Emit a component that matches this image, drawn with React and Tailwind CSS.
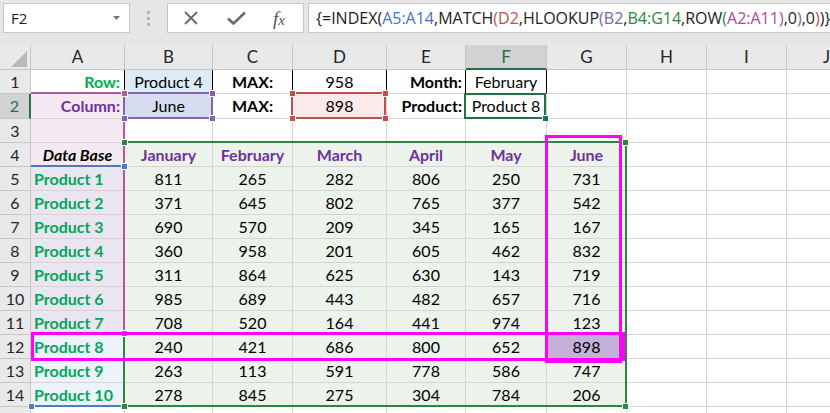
import React from "react";

const months = ["January", "February", "March", "April", "May", "June"];
const data = [
  [811, 265, 282, 806, 250, 731],
  [371, 645, 802, 765, 377, 542],
  [690, 570, 209, 345, 165, 167],
  [360, 958, 201, 605, 462, 832],
  [311, 864, 625, 630, 143, 719],
  [985, 689, 443, 482, 657, 716],
  [708, 520, 164, 441, 974, 123],
  [240, 421, 686, 800, 652, 898],
  [263, 113, 591, 778, 586, 747],
  [278, 845, 275, 304, 784, 206],
];
const cols = ["A", "B", "C", "D", "E", "F", "G", "H", "I", "J"];

const base =
  "border-b border-r border-b-[#d4d4d4] flex items-center overflow-hidden whitespace-nowrap leading-[24px]";

function Cell({ children, className = "", rc = "border-r-[#d4d4d4]" }) {
  return <div className={`${base} ${rc} ${className}`}>{children}</div>;
}

function RowHead({ n, sel }) {
  return (
    <div
      className={
        sel
          ? "border-b border-b-[#c6c6c6] bg-[#d2d2d2] text-[#217346] flex items-center justify-center border-r-2 border-r-[#217346] text-[16px]"
          : "border-b border-r border-b-[#c6c6c6] border-r-[#c6c6c6] bg-[#e9e9e9] text-[#262626] flex items-center justify-center text-[16px]"
      }
    >
      {n}
    </div>
  );
}

function Handle({ className }) {
  return <div className={`absolute w-[7px] h-[7px] border border-white ${className}`} />;
}

export default function App() {
  const rows = [];
  rows.push(
    <React.Fragment key="r1">
      <RowHead n={1} />
      <Cell className="justify-end pr-[4px] font-bold text-[#00b050]" rc="border-r-black">Row:</Cell>
      <Cell className="justify-center bg-[#ddebf7]" rc="border-r-black">Product 4</Cell>
      <Cell className="justify-center font-bold" rc="border-r-black">MAX:</Cell>
      <Cell className="justify-center" rc="border-r-black">958</Cell>
      <Cell className="justify-end pr-[3px] font-bold" rc="border-r-black">Month:</Cell>
      <Cell className="justify-center" rc="border-r-black">February</Cell>
      <Cell />
      <Cell />
      <Cell />
      <Cell />
    </React.Fragment>
  );
  rows.push(
    <React.Fragment key="r2">
      <RowHead n={2} sel />
      <Cell className="justify-end pr-[4px] font-bold text-[#7030a0] bg-[#f6eaf2]">Column:</Cell>
      <Cell className="justify-center bg-[#d6dcf0]">June</Cell>
      <Cell className="justify-center font-bold">MAX:</Cell>
      <Cell className="justify-center bg-[#fbeaea]">898</Cell>
      <Cell className="justify-end pr-[3px] font-bold">Product:</Cell>
      <Cell className="justify-center">Product 8</Cell>
      <Cell />
      <Cell />
      <Cell />
      <Cell />
    </React.Fragment>
  );
  rows.push(
    <React.Fragment key="r3">
      <RowHead n={3} />
      <Cell className="bg-[#f6eaf2]" />
      <Cell />
      <Cell />
      <Cell />
      <Cell />
      <Cell />
      <Cell />
      <Cell />
      <Cell />
      <Cell />
    </React.Fragment>
  );
  rows.push(
    <React.Fragment key="r4">
      <RowHead n={4} />
      <Cell className="justify-center font-bold italic bg-[#f6eaf2]">Data Base</Cell>
      {months.map((m) => (
        <Cell key={m} className="justify-center font-bold text-[#7030a0] bg-[#ebf3ea]">
          {m}
        </Cell>
      ))}
      <Cell />
      <Cell />
      <Cell />
    </React.Fragment>
  );
  data.forEach((vals, i) => {
    const r = i + 5;
    const aBg = r <= 11 ? "bg-[#ebe5f1]" : "bg-[#eef2fa]";
    rows.push(
      <React.Fragment key={"r" + r}>
        <RowHead n={r} />
        <Cell className={`pl-[3px] font-bold text-[#00a85a] ${aBg}`}>Product {i + 1}</Cell>
        {vals.map((v, j) => (
          <Cell
            key={j}
            className={
              r === 12 && j === 5
                ? "justify-center bg-[#c3b1d9]"
                : "justify-center bg-[#ebf3ea]"
            }
          >
            {v}
          </Cell>
        ))}
        <Cell />
        <Cell />
        <Cell />
      </React.Fragment>
    );
  });
  rows.push(
    <React.Fragment key="r15">
      <RowHead n="" />
      {cols.map((c) => (
        <Cell key={c} />
      ))}
    </React.Fragment>
  );

  return (
    <div className="relative w-[830px] h-[413px] overflow-hidden bg-white text-black font-['Lato',sans-serif] text-[16px]">
      {/* Formula bar */}
      <div className="h-[45px] bg-[#e6e6e6] flex items-start pt-[3px] pl-[3px]">
        <div className="w-[127px] h-[30px] bg-white border border-[#c6c6c6] flex items-center justify-between pl-[7px] pr-[9px] font-['Open_Sans',sans-serif] text-[15px] text-[#222]">
          <span>F2</span>
          <svg width="7" height="4" viewBox="0 0 7 4">
            <path d="M0 0 L7 0 L3.5 4 Z" fill="#777" />
          </svg>
        </div>
        <div className="w-[37px] h-[30px] flex flex-col items-center justify-center gap-[3px]">
          <div className="w-[3px] h-[3px] bg-[#b5b5b5]" />
          <div className="w-[3px] h-[3px] bg-[#b5b5b5]" />
          <div className="w-[3px] h-[3px] bg-[#b5b5b5]" />
        </div>
        <div className="w-[137px] h-[30px] bg-white border border-[#c6c6c6] flex items-center">
          <svg className="ml-[15px]" width="16" height="16" viewBox="0 0 16 16">
            <path d="M2 2 L14 14 M14 2 L2 14" stroke="#6a6a6a" strokeWidth="1.8" />
          </svg>
          <svg className="ml-[28px]" width="19" height="14" viewBox="0 0 19 14">
            <path d="M1 7.5 L6.5 12.5 L18 1.5" stroke="#6a6a6a" strokeWidth="2.6" fill="none" />
          </svg>
          <span className="ml-[27px] font-['Liberation_Serif',serif] italic text-[19px] text-[#555] leading-none">
            f<span className="text-[15px]">x</span>
          </span>
        </div>
        <div className="ml-[4px] flex-1 h-[30px] bg-white border border-[#c6c6c6] border-r-0 flex items-center pl-[7px] font-['Open_Sans',sans-serif] text-[16px] text-[#222] whitespace-nowrap overflow-hidden">
          <span>{"{=INDEX("}</span>
          <span className="text-[#4472c4]">A5:A14</span>
          <span>,MATCH</span>
          <span className="text-[#c0504d]">(D2</span>
          <span>,HLOOKUP</span>
          <span className="text-[#8064a2]">(B2</span>
          <span>,</span>
          <span className="text-[#2e8540]">B4:G14</span>
          <span>,ROW</span>
          <span className="text-[#2e8540]">(</span>
          <span className="text-[#b5468f]">A2:A11)</span>
          <span>,0</span>
          <span className="text-[#8064a2]">)</span>
          <span>,0</span>
          <span className="text-[#c0504d]">)</span>
          <span>{")}"}</span>
        </div>
      </div>

      {/* Sheet grid */}
      <div className="grid w-max grid-cols-[31px_94px_88px_80px_94px_79px_81px_80px_80px_80px_80px] grid-rows-[25px_24px_25px_24px_repeat(11,24px)_24px]">
        <div className="border-b border-r border-[#c6c6c6] bg-[#e9e9e9] relative">
          <svg className="absolute left-[11px] top-[6px]" width="16" height="16" viewBox="0 0 16 16">
            <path d="M16 0 L16 16 L0 16 Z" fill="#b9b9b9" />
          </svg>
        </div>
        {cols.map((c) =>
          c === "F" ? (
            <div
              key={c}
              className="border-r border-r-[#c6c6c6] border-b-2 border-b-[#217346] bg-[#d2d2d2] text-[#217346] flex items-center justify-center text-[17px]"
            >
              {c}
            </div>
          ) : (
            <div
              key={c}
              className="border-r border-b border-[#c6c6c6] bg-[#e9e9e9] text-[#262626] flex items-center justify-center text-[17px]"
            >
              {c}
            </div>
          )
        )}
        {rows}
      </div>

      {/* Range highlight overlays */}
      <div className="absolute left-[31px] top-[165px] w-[94px] h-[2px] bg-[#4a7bc8]" />
      <div className="absolute left-[31px] top-[405px] w-[94px] h-[2px] bg-[#4a7bc8]" />
      <div className="absolute left-[123px] top-[141px] w-[504px] h-[266px] border-2 border-[#2e8540]" />
      <div className="absolute left-[31px] top-[92px] w-[94px] h-[243px] border-2 border-l-0 border-[#b5579a]" />
      <div className="absolute left-[123px] top-[92px] w-[90px] h-[27px] border-2 border-[#8064b0]" />
      <div className="absolute left-[291px] top-[92px] w-[95px] h-[27px] border-2 border-[#c0504d]" />
      <div className="absolute left-[464px] top-[93px] w-[82px] h-[26px] border-2 border-[#217346]" />
      <Handle className="left-[542px] top-[115px] bg-[#217346]" />

      <Handle className="left-[121px] top-[163px] bg-[#4a7bc8]" />
      <Handle className="left-[28px] top-[403px] bg-[#4a7bc8]" />
      <Handle className="left-[121px] top-[139px] bg-[#2e8540]" />
      <Handle className="left-[622px] top-[139px] bg-[#2e8540]" />
      <Handle className="left-[121px] top-[403px] bg-[#2e8540]" />
      <Handle className="left-[622px] top-[403px] bg-[#2e8540]" />
      <Handle className="left-[209px] top-[90px] bg-[#8064b0]" />
      <Handle className="left-[121px] top-[115px] bg-[#8064b0]" />
      <Handle className="left-[209px] top-[115px] bg-[#8064b0]" />
      <Handle className="left-[289px] top-[90px] bg-[#c0504d]" />
      <Handle className="left-[382px] top-[90px] bg-[#c0504d]" />
      <Handle className="left-[289px] top-[115px] bg-[#c0504d]" />
      <Handle className="left-[382px] top-[115px] bg-[#c0504d]" />
      <Handle className="left-[121px] top-[90px] bg-[#b5579a]" />
      <Handle className="left-[121px] top-[330px] bg-[#b5579a]" />

      {/* magenta annotation rectangles */}
      <div className="absolute left-[545px] top-[135px] w-[77px] h-[228px] border-[3px] border-[#ff00ff]" />
      <div className="absolute left-[31px] top-[332px] w-[594px] h-[29px] border-[3px] border-[#ff00ff]" />
    </div>
  );
}
